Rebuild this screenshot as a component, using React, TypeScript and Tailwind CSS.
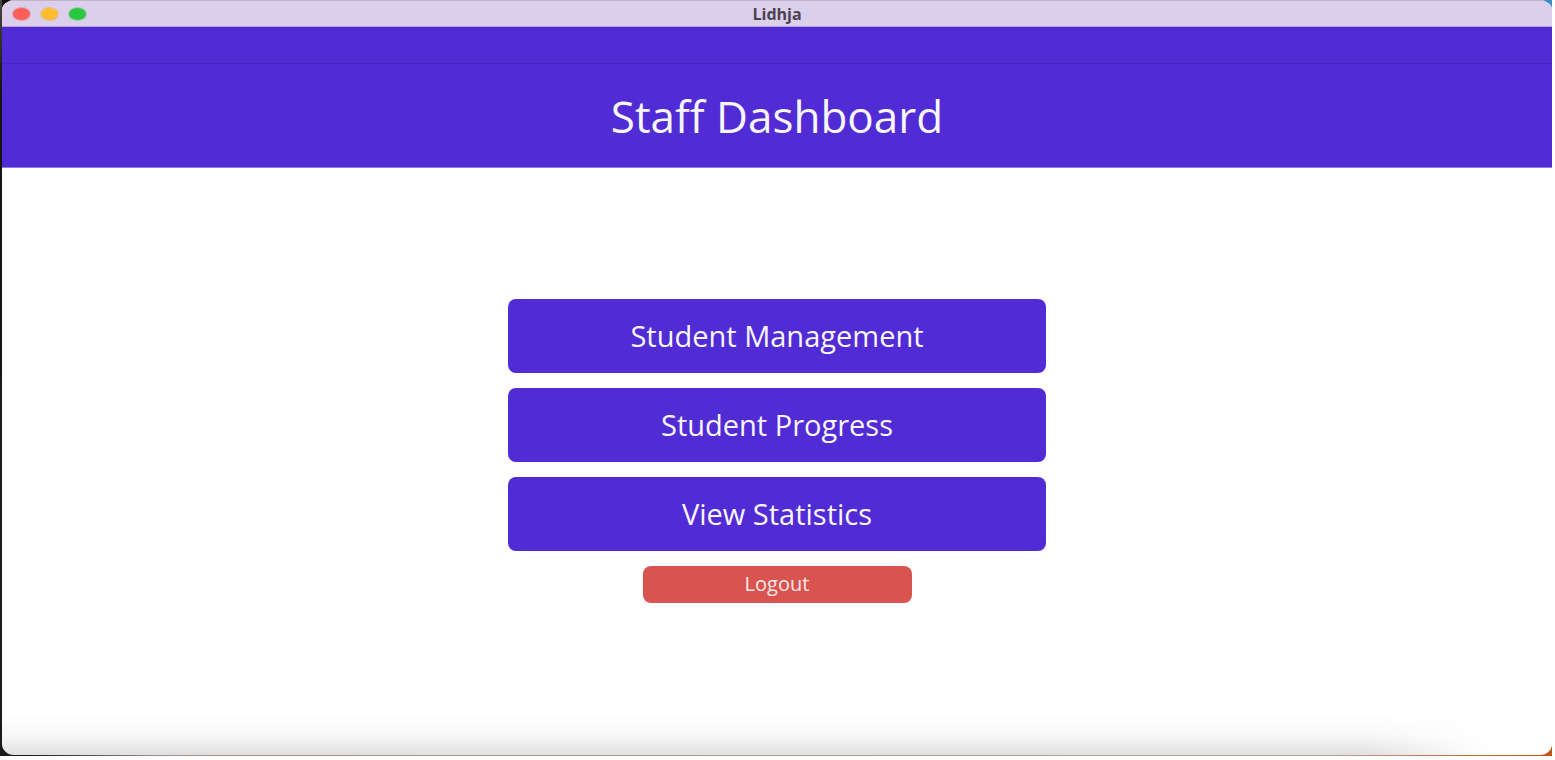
import React from "react";

const actions = ["Student Management", "Student Progress", "View Statistics"];

function WindowControls() {
  return (
    <div className="flex flex-1 items-center gap-[11px]">
      <button type="button" aria-label="Close" className="h-3 w-[17px] rounded-[50%] bg-[#ff5f57] ring-1 ring-[#d9a5b0]" />
      <button type="button" aria-label="Minimize" className="h-3 w-[17px] rounded-[50%] bg-[#febc2e] ring-1 ring-[#d9c0a8]" />
      <button type="button" aria-label="Zoom" className="h-3 w-[17px] rounded-[50%] bg-[#28c840] ring-1 ring-[#a9c9b0]" />
    </div>
  );
}

function TitleBar() {
  return (
    <div className="flex h-[27px] items-center border-t border-b border-t-[#bfb5c6] border-b-[#b5a3d6] bg-[#dccfeb] px-[11px]">
      <WindowControls />
      <span className="text-base leading-4 font-bold text-[#48434e]">Lidhja</span>
      <div className="flex-1" />
    </div>
  );
}

export default function App() {
  return (
    <div className="flex min-h-screen bg-white pr-[3px] pb-1 font-['Open_Sans','Noto_Sans',sans-serif]">
      <div className="flex flex-1 bg-[linear-gradient(to_bottom,#4a4643,#161412_12%,#161412_50%,transparent_50%),linear-gradient(to_right,#1c1a19_2%,#a08f88_10%,#bfa394_85%,#c2551c_99%)] pb-px pl-0.5 [background-size:2px_100%,100%_100%] bg-no-repeat">
        <div className="flex flex-1 bg-[linear-gradient(to_right,#111_50%,#3d8cc4_50%)] bg-[length:100%_50%] bg-no-repeat">
          <div className="flex flex-1 flex-col overflow-hidden rounded-[13px_13px_12px_12px/10px_10px_11px_11px] bg-white">
            <TitleBar />
            <div className="h-[37px] border-b border-[#4a27c4] bg-[#512bd4]" />
            <header className="flex h-[104px] items-center justify-center border-b border-[#8f78e4] bg-[#512bd4]">
              <h1 className="text-[44px] leading-[60px] text-[#f8f6fe]">Staff Dashboard</h1>
            </header>
            <main className="relative flex flex-1 flex-col items-center justify-center gap-[15px] pb-[22px]">
              {actions.map((label) => (
                <button
                  key={label}
                  type="button"
                  className="h-[74px] w-[538px] max-w-full rounded-lg bg-[#512bd4] text-[29px] leading-10 text-[#f8f6fe]"
                >
                  {label}
                </button>
              ))}
              <button
                type="button"
                className="h-[37px] w-[269px] max-w-full rounded-lg bg-[#d9534f] text-xl leading-7 text-[#fbeceb]"
              >
                Logout
              </button>
              <div className="pointer-events-none absolute inset-x-0 bottom-0 h-10 bg-linear-to-b from-transparent via-black/3 to-black/12 [mask-image:linear-gradient(to_right,black_88%,transparent_96%)]" />
            </main>
          </div>
        </div>
      </div>
    </div>
  );
}
